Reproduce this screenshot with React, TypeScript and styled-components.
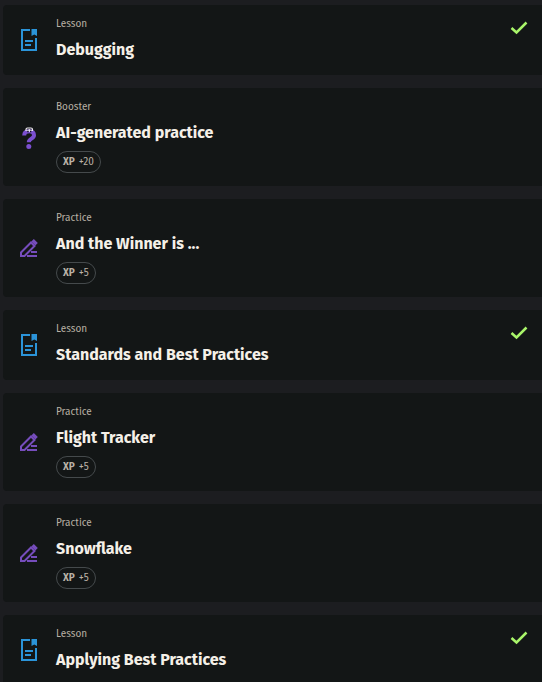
import React from "react";
import styled, { createGlobalStyle } from "styled-components";

const GlobalStyle = createGlobalStyle`
  * { box-sizing: border-box; }
  body {
    margin: 0;
    background: #1c1d20;
    overflow: hidden;
    font-family: "Fira Sans", "Noto Sans", sans-serif;
  }
`;

const List = styled.ul`
  list-style: none;
  margin: 0;
  padding: 5px 0 0 3px;
  display: flex;
  flex-direction: column;
  gap: 13px;
`;

const Card = styled.a`
  display: flex;
  align-items: center;
  padding: 11px 14px 12px 16px;
  border-radius: 4px 0 0 4px;
  background: #131616;
  color: #f5f0e8;
  text-decoration: none;
`;

const IconSlot = styled.span`
  display: flex;
  width: 20px;
  margin-right: 17px;
`;

const Body = styled.div`
  flex: 1;
  min-width: 0;
`;

const Kind = styled.div`
  font-size: 10px;
  line-height: 16px;
  color: #b9b1a5;
`;

const Title = styled.h3`
  margin: 5px 0 0;
  font-family: "Fira Sans", "Open Sans", sans-serif;
  font-size: 16px;
  font-weight: 700;
  line-height: 26px;
`;

const Pill = styled.span`
  display: flex;
  width: fit-content;
  gap: 4px;
  margin: 5px 0 1px;
  padding: 0 6px;
  border: 1px solid #454a4c;
  border-radius: 11px;
  font-size: 10px;
  line-height: 20px;
  color: #b9b1a5;
`;

const CheckSlot = styled.span`
  display: flex;
  align-self: flex-start;
  margin-top: 5px;
`;

const LessonIcon = () => (
  <svg width="20" height="24" viewBox="0 0 20 24" fill="none" stroke="#2b94d9" strokeWidth="2">
    <path d="M11 2H3v20h14V10" />
    <path d="M6 13h8M6 17h6" />
    <path d="M12.500 1H18v7l-2.750-1.500L12.500 8z" fill="#2b94d9" stroke="none" />
  </svg>
);

const BoosterIcon = () => (
  <svg width="20" height="26" viewBox="0 0 20 26" fill="none">
    <path d="M5.200 11.500C5.200 8.500 7.200 7.200 10.200 7.200s4.800 1.500 4.800 4c0 3.800-5.200 3-5.200 7" stroke="#7b4fd0" strokeWidth="4" />
    <circle cx="9.800" cy="22.500" r="2.500" fill="#7b4fd0" />
    <path d="M7 7V5.500Q7 4 8.500 4h3.500Q13.500 4 13.500 5.500V7" stroke="#f1edf5" strokeWidth="1.200" />
    <path d="M7.600 6.300h5.300M10.250 5v3" stroke="#f1edf5" />
    <path d="M8.300 7.500h1.300M11 7.500h1.300" stroke="#131616" strokeWidth="1.300" />
  </svg>
);

const PracticeIcon = () => (
  <svg width="20" height="20" viewBox="0 0 20 20" fill="none" stroke="#764dbc" strokeWidth="2">
    <path d="M2 18v-3.500L12 4.500l3.500 3.500L5.500 18z" />
    <path d="M12.300 3.500L14.800 1l4 4-2.500 2.500z" fill="#764dbc" stroke="none" />
    <path d="M12 14h6M8 18h10" />
  </svg>
);

const CheckIcon = () => (
  <svg width="18" height="14" viewBox="0 0 18 14" fill="none" stroke="#a9f56a" strokeWidth="2.500">
    <path d="M1.500 7l5 4.500L16.500 1.500" />
  </svg>
);

type Item = { kind: "Lesson" | "Booster" | "Practice"; title: string; xp?: number; done?: boolean };

const items: Item[] = [
  { kind: "Lesson", title: "Debugging", done: true },
  { kind: "Booster", title: "AI-generated practice", xp: 20 },
  { kind: "Practice", title: "And the Winner is ...", xp: 5 },
  { kind: "Lesson", title: "Standards and Best Practices", done: true },
  { kind: "Practice", title: "Flight Tracker", xp: 5 },
  { kind: "Practice", title: "Snowflake", xp: 5 },
  { kind: "Lesson", title: "Applying Best Practices", done: true },
];

const icons = { Lesson: LessonIcon, Booster: BoosterIcon, Practice: PracticeIcon };

export default function App() {
  return (
    <>
      <GlobalStyle />
      <List>
        {items.map((item) => {
          const Icon = icons[item.kind];
          return (
            <li key={item.title}>
              <Card href="#">
                <IconSlot><Icon /></IconSlot>
                <Body>
                  <Kind>{item.kind}</Kind>
                  <Title>{item.title}</Title>
                  {item.xp && (
                    <Pill><b>XP</b><span>+{item.xp}</span></Pill>
                  )}
                </Body>
                {item.done && <CheckSlot aria-label="Completed"><CheckIcon /></CheckSlot>}
              </Card>
            </li>
          );
        })}
      </List>
    </>
  );
}
